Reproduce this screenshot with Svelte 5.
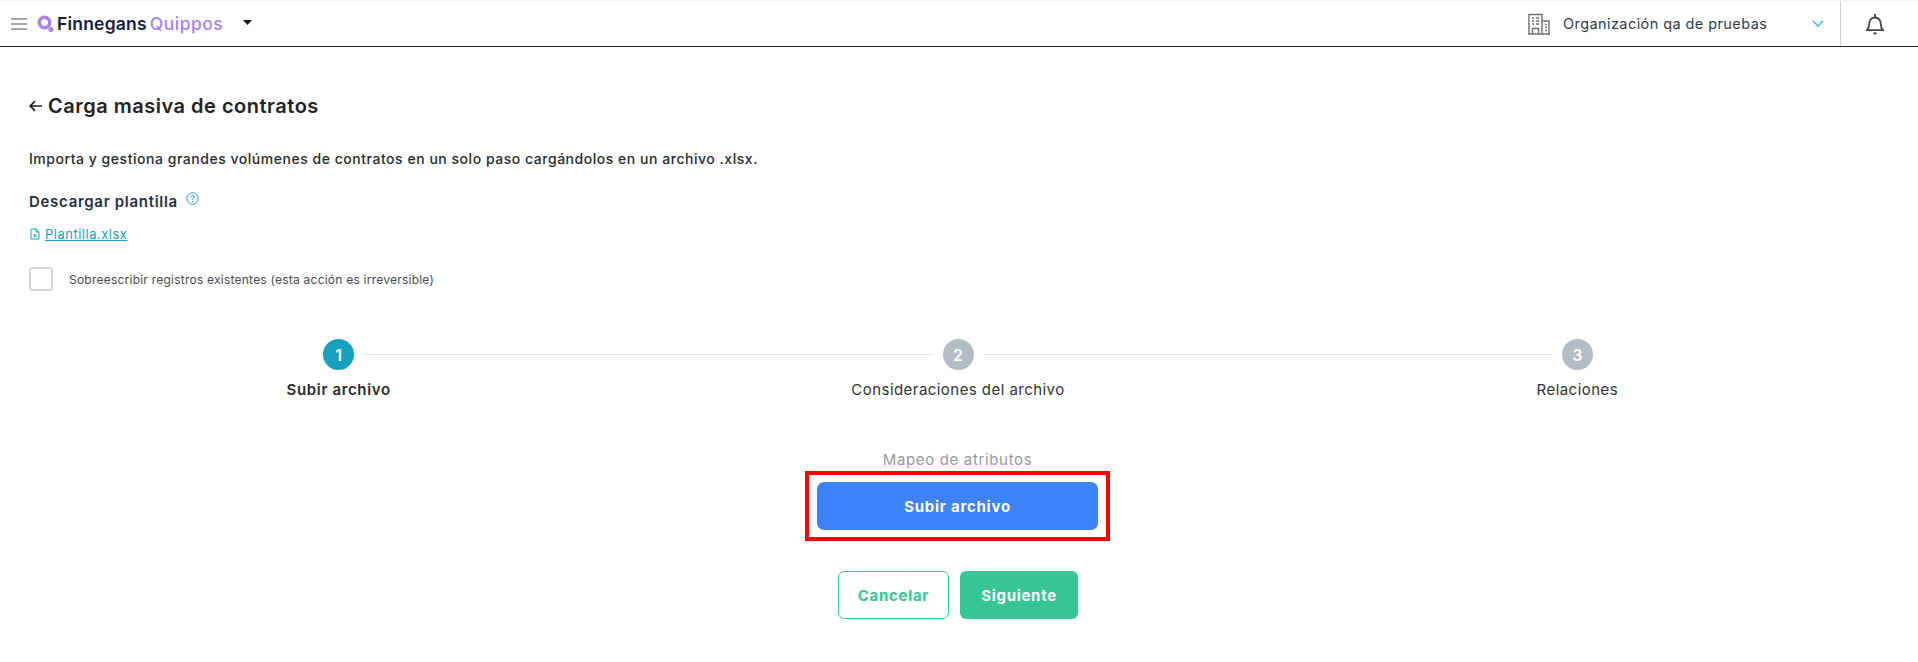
<script>
  const steps = [
    { n: 1, label: 'Subir archivo', active: true },
    { n: 2, label: 'Consideraciones del archivo', active: false },
    { n: 3, label: 'Relaciones', active: false }
  ];
</script>

<header class="topbar">
  <div class="brand">
    <button class="menu" aria-label="Menú">
      <svg width="16" height="12" viewBox="0 0 16 12"><path d="M0 1h16M0 6h16M0 11h16" stroke="#8f8f8f" stroke-width="1.6" fill="none" /></svg>
    </button>
    <svg class="logo-mark" width="17" height="18" viewBox="0 0 17 18">
      <circle cx="7.500" cy="7.500" r="5.200" fill="none" stroke="#a683ec" stroke-width="3.400" />
      <circle cx="14" cy="14.500" r="2.500" fill="#a683ec" />
    </svg>
    <span class="logo-a">Finnegans</span>
    <span class="logo-b">Quippos</span>
    <svg class="caret" width="9" height="5" viewBox="0 0 9 5"><path d="M0 0h9L4.500 5z" fill="#1a1a1a" /></svg>
  </div>
  <div class="org">
    <svg width="22" height="22" viewBox="0 0 22 22" fill="none" stroke="#6f6f6f" stroke-width="1.4">
      <path d="M1 21V1.500h13V21M14 8h7v13M0 21h22" />
      <path d="M4 5h2M8 5h3M4 8h2M8 8h3M4 11h2M8 11h3M17 11.500h2M17 14.500h2M17 17.500h2" />
      <path d="M4.500 21v-5.500h6V21" />
    </svg>
    <span class="org-name">Organización qa de pruebas</span>
    <svg class="chev" width="12" height="7" viewBox="0 0 12 7"><path d="M1 1l5 5 5-5" fill="none" stroke="#29b6e8" stroke-width="1.3" /></svg>
  </div>
  <div class="bell">
    <svg width="18" height="22" viewBox="0 0 18 22" fill="none" stroke="#444" stroke-width="1.8">
      <path d="M1 17.200h16c-1.500-1.500-2.200-3-2.200-6.200 0-3.800-2.300-6.500-5.800-6.500S3.200 7.200 3.200 11c0 3.200-.7 4.700-2.200 6.200z" />
      <path d="M9 1v3M7.300 20.300h3.400" />
    </svg>
  </div>
</header>

<main class="page">
  <h1 class="title">
    <svg width="14" height="12" viewBox="0 0 14 12"><path d="M13 6H1.500M6 1.200L1.200 6 6 10.800" fill="none" stroke="#222" stroke-width="1.700" /></svg>
    Carga masiva de contratos
  </h1>
  <p class="desc">Importa y gestiona grandes volúmenes de contratos en un solo paso cargándolos en un archivo .xlsx.</p>
  <div class="dl-head">
    <span>Descargar plantilla</span>
    <svg width="13" height="13" viewBox="0 0 13 13" fill="none" stroke="#1a9fbf" stroke-width="1">
      <circle cx="6.500" cy="6.500" r="5.700" />
      <path d="M4.800 5.200c0-2.300 3.500-2.200 3.500-.1 0 1.300-1.800 1.400-1.800 2.800M6.500 9v1" />
    </svg>
  </div>
  <a class="file" href="#plantilla">
    <svg width="10" height="12" viewBox="0 0 10 12" fill="none" stroke="#1a9fbf" stroke-width="1">
      <path d="M1 1h5l3 3v7H1zM6 1v3h3M3.500 6l3 3.500M6.500 6l-3 3.500" />
    </svg>
    <span>Plantilla.xlsx</span>
  </a>
  <label class="check">
    <span class="box"></span>
    <span>Sobreescribir registros existentes (esta acción es irreversible)</span>
  </label>

  <ol class="steps">
    {#each steps as s, i}
      <li class="step" class:active={s.active}>
        <div class="track">
          <span class="line" class:none={i === 0}></span>
          <span class="dot">{s.n}</span>
          <span class="line" class:none={i === steps.length - 1}></span>
        </div>
        <span class="step-label">{s.label}</span>
      </li>
    {/each}
  </ol>

  <div class="upload">
    <span class="map">Mapeo de atributos</span>
    <div class="highlight">
      <button class="btn-upload">Subir archivo</button>
    </div>
  </div>

  <div class="actions">
    <button class="btn ghost">Cancelar</button>
    <button class="btn solid">Siguiente</button>
  </div>
</main>

<style>
  :global(body) {
    margin: 0;
    background: #fff;
    font-family: Inter, "Open Sans", sans-serif;
    color: #222;
  }

  button {
    font-family: inherit;
    cursor: pointer;
  }

  .topbar {
    display: flex;
    align-items: stretch;
    height: 45px;
    border-top: 1px solid #f1f1f1;
    border-bottom: 1px solid #1f2937;
  }

  .brand {
    display: flex;
    align-items: center;
    flex: 1;
    padding-left: 11px;
  }

  .menu {
    display: flex;
    padding: 0;
    border: 0;
    background: none;
  }

  .logo-mark {
    margin-left: 10px;
    margin-right: 3px;
  }

  .logo-a,
  .logo-b {
    font-size: 17.500px;
    font-weight: 600;
    letter-spacing: 0.2px;
    color: #16203a;
  }

  .logo-b {
    margin-left: 3px;
    font-weight: 500;
    letter-spacing: 0.5px;
    color: #a683ec;
  }

  .caret {
    margin-left: 20px;
    margin-top: -3px;
  }

  .org {
    display: flex;
    align-items: center;
    width: 312px;
    border-right: 1px solid #cfcfcf;
  }

  .org-name {
    margin-left: 13px;
    font-size: 14.500px;
    letter-spacing: 0.42px;
    color: #333b47;
  }

  .chev {
    margin-left: auto;
    margin-right: 16px;
  }

  .bell {
    display: flex;
    align-items: center;
    justify-content: center;
    width: 67px;
    padding-right: 10px;
  }

  .page {
    padding: 46px 31px 0 29px;
  }

  .title {
    display: flex;
    align-items: center;
    gap: 5px;
    margin: 0;
    font-size: 20px;
    line-height: 26px;
    font-weight: 600;
    letter-spacing: 0.5px;
    color: #222;
  }

  .desc {
    margin: 30px 0 0;
    font-size: 14px;
    line-height: 20px;
    font-weight: 500;
    letter-spacing: 0.53px;
    color: #2b2b2b;
  }

  .dl-head {
    display: flex;
    gap: 8px;
    margin-top: 23px;
    font-size: 15px;
    line-height: 20px;
    font-weight: 600;
    letter-spacing: 0.7px;
    color: #263040;
  }

  .dl-head svg {
    margin-top: 0;
  }

  .file {
    display: flex;
    align-items: center;
    gap: 5px;
    width: fit-content;
    margin-top: 12px;
    margin-left: 1px;
    font-size: 13px;
    line-height: 20px;
    letter-spacing: 0.5px;
    color: #1a9fbf;
  }

  .check {
    display: flex;
    align-items: center;
    gap: 16px;
    margin-top: 23px;
    font-size: 12px;
    letter-spacing: 0.23px;
    color: #4a4a4a;
  }

  .box {
    box-sizing: border-box;
    width: 24px;
    height: 24px;
    border: 2px solid #d3d8de;
    border-radius: 3px;
  }

  .steps {
    display: grid;
    grid-template-columns: repeat(3, 1fr);
    margin: 48px 0 0;
    padding: 0;
    list-style: none;
  }

  .step {
    display: flex;
    flex-direction: column;
    align-items: center;
  }

  .track {
    display: flex;
    align-items: center;
    gap: 10px;
    width: 100%;
  }

  .line {
    flex: 1;
    height: 1px;
    background: #e6e6e6;
  }

  .line.none {
    background: transparent;
  }

  .dot {
    display: flex;
    align-items: center;
    justify-content: center;
    width: 31px;
    height: 31px;
    border-radius: 50%;
    background: #b4bcc6;
    color: #fff;
    font-size: 16px;
    font-weight: 600;
  }

  .active .dot {
    background: #189fbe;
  }

  .step-label {
    margin-top: 11px;
    font-size: 15px;
    line-height: 18px;
    letter-spacing: 0.45px;
    color: #333;
  }

  .active .step-label {
    font-weight: 600;
    letter-spacing: 0.65px;
    color: #2b2b2b;
  }

  .upload {
    display: flex;
    flex-direction: column;
    align-items: center;
    margin-top: 52px;
    padding-right: 1px;
  }

  .map {
    font-size: 15px;
    line-height: 18px;
    letter-spacing: 0.65px;
    color: #999;
  }

  .highlight {
    box-sizing: border-box;
    width: 305px;
    height: 70px;
    margin-top: 2px;
    padding: 7px 8px;
    border: 4px solid #f00;
  }

  .btn-upload {
    display: block;
    width: 100%;
    height: 48px;
    border: 0;
    border-radius: 7px;
    background: #3e82f7;
    color: #fff;
    font-size: 15px;
    font-weight: 700;
    letter-spacing: 0.75px;
  }

  .actions {
    display: flex;
    justify-content: center;
    gap: 11px;
    margin-top: 30px;
  }

  .btn {
    box-sizing: border-box;
    height: 48px;
    border-radius: 6px;
    font-size: 15px;
    font-weight: 700;
    letter-spacing: 0.7px;
  }

  .ghost {
    width: 111px;
    border: 1px solid #38c695;
    background: #fff;
    color: #38c695;
  }

  .solid {
    width: 118px;
    border: 0;
    background: #38c695;
    color: #fff;
  }
</style>
